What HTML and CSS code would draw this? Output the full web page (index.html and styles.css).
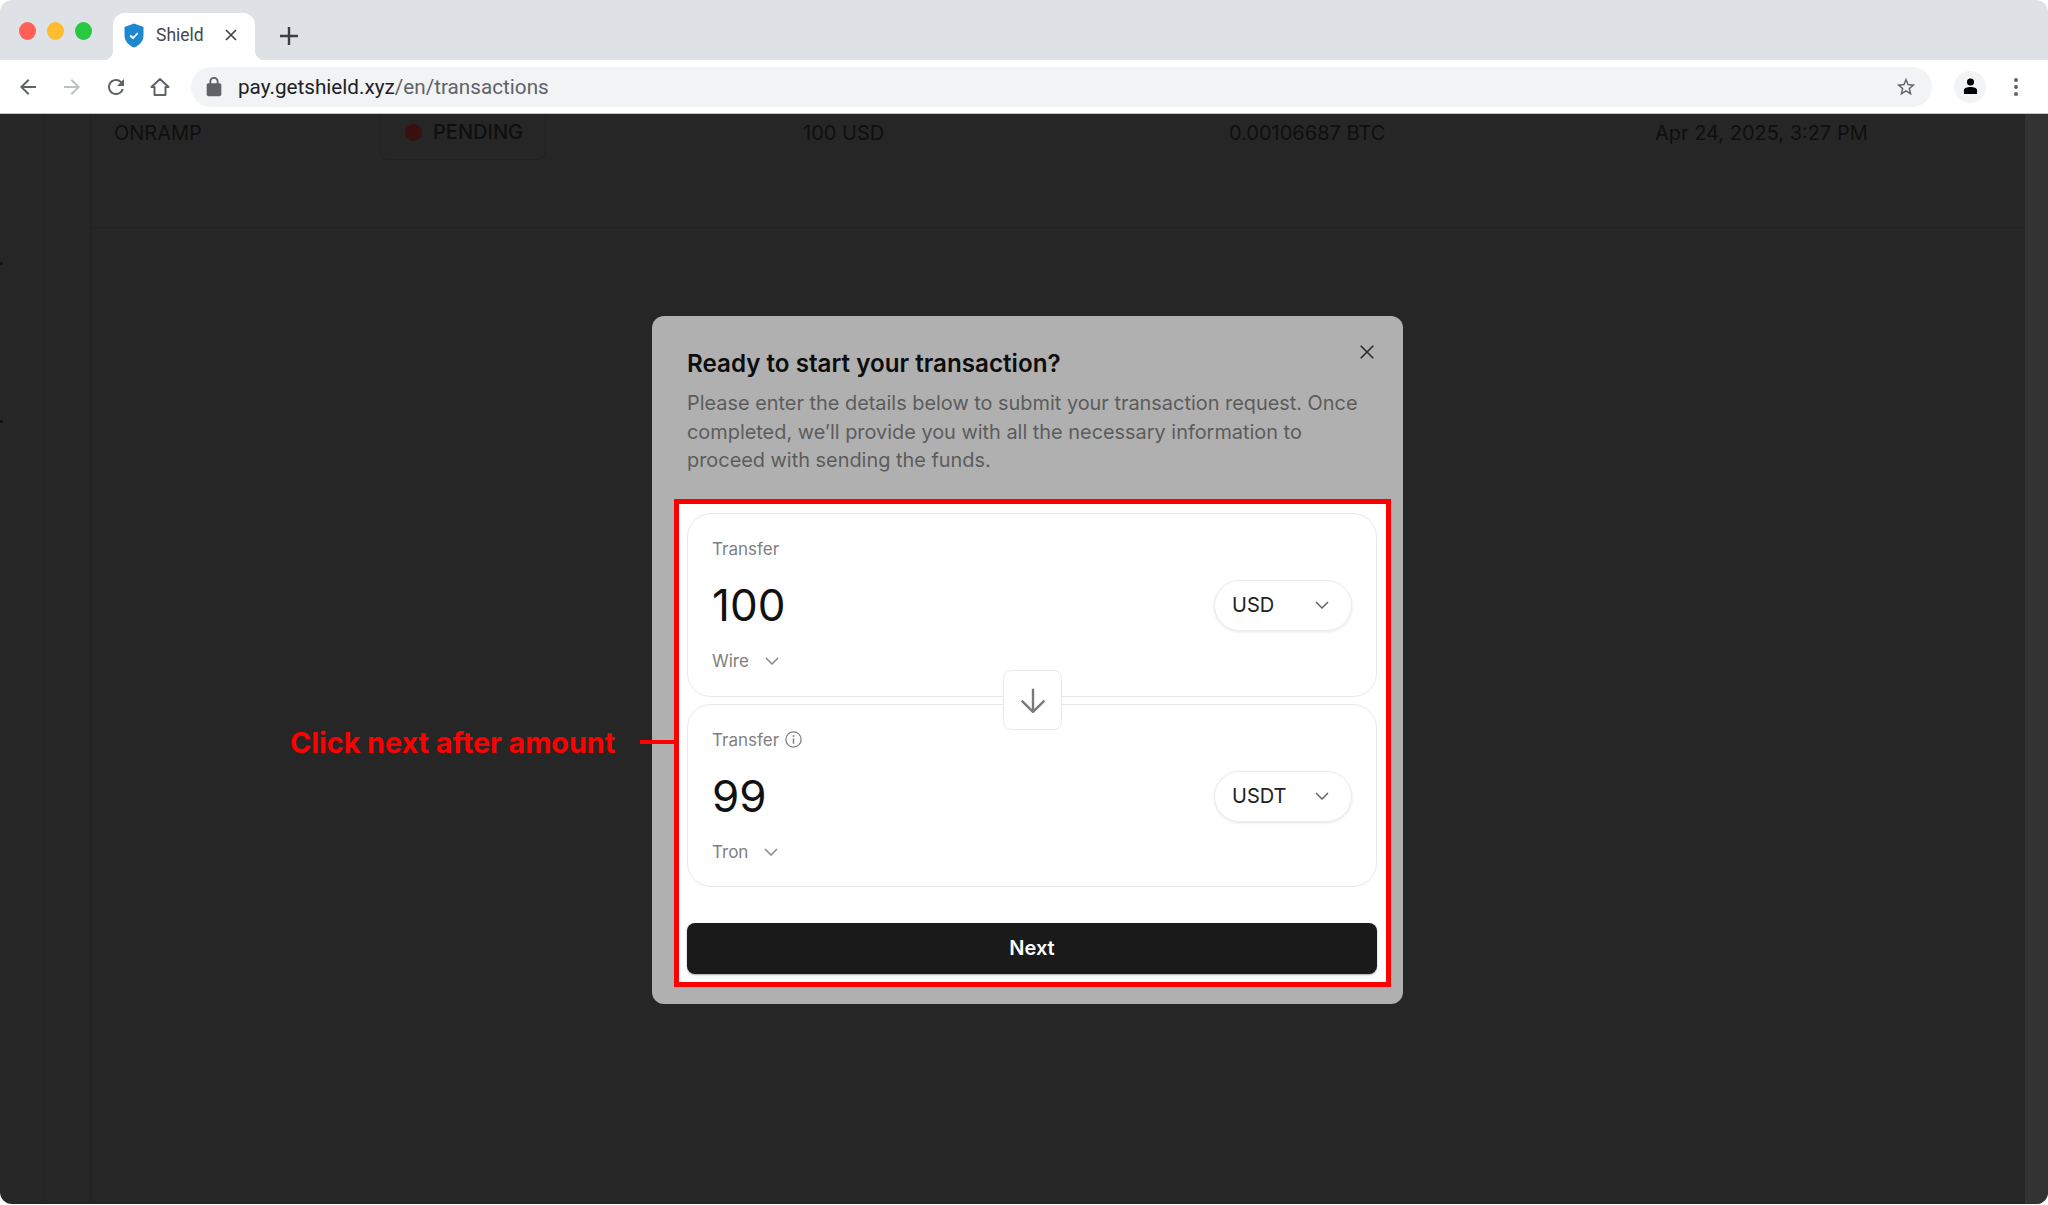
FILE: index.html
```html
<!DOCTYPE html>
<html lang="en">
<head>
    <meta charset="UTF-8">
    <meta name="viewport" content="width=device-width, initial-scale=1.0">
    <title>Shield</title>
    <link rel="stylesheet" href="styles.css">
</head>
<body>
<div class="window">
    <!-- browser chrome -->
    <div class="tabstrip">
        <div class="lights">
            <span class="light red"></span>
            <span class="light yellow"></span>
            <span class="light green"></span>
        </div>
        <div class="tab">
            <svg class="favicon" viewBox="0 0 20 25"><path d="M10 0.5 L19.5 4 V12 C19.5 18 15.5 22.5 10 24.5 C4.500 22.5 0.500 18 0.500 12 V4 Z" fill="#1f87cf"/><path d="M6.200 12.500 L9 15 L13.800 10.200" fill="none" stroke="#fff" stroke-width="1.700"/></svg>
            <span class="tab-title">Shield</span>
            <svg class="tab-close" viewBox="0 0 12 12"><path d="M1 1 L11 11 M11 1 L1 11" stroke="#3c4043" stroke-width="1.600"/></svg>
        </div>
        <svg class="new-tab" viewBox="0 0 20 20"><path d="M10 1 V19 M1 10 H19" stroke="#3c4043" stroke-width="2.400"/></svg>
    </div>
    <div class="toolbar">
        <svg class="tool" viewBox="0 0 24 24"><path d="M20 11H7.830l5.590-5.590L12 4l-8 8 8 8 1.410-1.410L7.830 13H20v-2z" fill="#5f6368"/></svg>
        <svg class="tool" viewBox="0 0 24 24"><path d="M4 11h12.170l-5.590-5.590L12 4l8 8-8 8-1.410-1.410L16.170 13H4v-2z" fill="#bdc1c6"/></svg>
        <svg class="tool" viewBox="0 0 24 24"><path d="M17.650 6.350A7.958 7.958 0 0 0 12 4c-4.420 0-7.990 3.580-7.990 8s3.570 8 7.990 8c3.730 0 6.840-2.550 7.730-6h-2.080A5.990 5.990 0 0 1 12 18c-3.310 0-6-2.690-6-6s2.690-6 6-6c1.660 0 3.140.690 4.220 1.780L13 11h7V4l-2.350 2.350z" fill="#5f6368"/></svg>
        <svg class="tool" viewBox="0 0 24 24"><path d="M12 4 L3.500 12 H6.500 V20 H17.500 V12 H20.500 Z" fill="none" stroke="#5f6368" stroke-width="2" stroke-linejoin="round"/></svg>
        <div class="omnibox">
            <svg class="lock" viewBox="0 0 24 24"><path d="M18 8h-1V6c0-2.760-2.240-5-5-5S7 3.240 7 6v2H6c-1.100 0-2 .900-2 2v10c0 1.100.900 2 2 2h12c1.100 0 2-.900 2-2V10c0-1.100-.900-2-2-2zM9 8V6c0-1.660 1.340-3 3-3s3 1.340 3 3v2H9z" fill="#5f6368"/></svg>
            <span class="url"><span class="host">pay.getshield.xyz</span>/en/transactions</span>
            <svg class="star" viewBox="0 0 24 24"><path d="M22 9.240l-7.190-.620L12 2 9.190 8.630 2 9.240l5.460 4.730L5.820 21 12 17.270 18.180 21l-1.630-7.030L22 9.240zM12 15.400l-3.760 2.270 1-4.280-3.320-2.880 4.380-.380L12 6.100l1.710 4.040 4.380.380-3.320 2.880 1 4.280L12 15.400z" fill="#5f6368"/></svg>
        </div>
        <div class="avatar">
            <svg viewBox="0 0 16 18"><circle cx="8" cy="4.200" r="3.800" fill="#000"/><path d="M1 17 V13 C1 10.500 4.500 9.500 8 9.500 C11.500 9.500 15 10.500 15 13 V17 Z" fill="#000"/></svg>
        </div>
        <svg class="kebab" viewBox="0 0 24 24"><circle cx="12" cy="5" r="2" fill="#5f6368"/><circle cx="12" cy="12" r="2" fill="#5f6368"/><circle cx="12" cy="19" r="2" fill="#5f6368"/></svg>
    </div>

    <!-- page behind the dialog -->
    <div class="page">
        <div class="rail"><span class="rail-tick first"></span><span class="rail-tick second"></span></div>
        <div class="rail wide"></div>
        <div class="content">
            <div class="tx-row">
                <span>ONRAMP</span>
                <span class="status"><span class="status-dot"></span>PENDING</span>
                <span>100 USD</span>
                <span>0.00106687 BTC</span>
                <span>Apr 24, 2025, 3:27 PM</span>
            </div>
        </div>
        <div class="scrollbar"></div>

        <div class="overlay">
            <div class="modal">
                <svg class="modal-close" viewBox="0 0 14 14"><path d="M1.500 1.500 L12.500 12.500 M12.500 1.500 L1.500 12.500" stroke="#2a2a2a" stroke-width="1.400"/></svg>
                <div class="modal-head">
                    <h2>Ready to start your transaction?</h2>
                    <p>Please enter the details below to submit your transaction request. Once completed, we’ll provide you with all the necessary information to proceed with sending the funds.</p>
                </div>
                <div class="highlight">
                    <div class="stack">
                        <div class="card">
                            <div class="label">Transfer</div>
                            <div class="amount-row">
                                <span class="amount">100</span>
                                <span class="pill">USD
                                    <svg class="chev" viewBox="0 0 14 8"><path d="M1 1 L7 7 L13 1" fill="none" stroke="#666" stroke-width="1.500"/></svg>
                                </span>
                            </div>
                            <div class="chain">Wire
                                <svg class="chev" viewBox="0 0 14 8"><path d="M1 1 L7 7 L13 1" fill="none" stroke="#888" stroke-width="1.500"/></svg>
                            </div>
                        </div>
                        <div class="card">
                            <div class="label">Transfer
                                <svg class="info" viewBox="0 0 16 16"><circle cx="8" cy="8" r="7.200" fill="none" stroke="#808080" stroke-width="1.200"/><path d="M8 7 V12" stroke="#808080" stroke-width="1.400"/><circle cx="8" cy="4.700" r="0.900" fill="#808080"/></svg>
                            </div>
                            <div class="amount-row">
                                <span class="amount">99</span>
                                <span class="pill">USDT
                                    <svg class="chev" viewBox="0 0 14 8"><path d="M1 1 L7 7 L13 1" fill="none" stroke="#666" stroke-width="1.500"/></svg>
                                </span>
                            </div>
                            <div class="chain">Tron
                                <svg class="chev" viewBox="0 0 14 8"><path d="M1 1 L7 7 L13 1" fill="none" stroke="#888" stroke-width="1.500"/></svg>
                            </div>
                        </div>
                        <div class="swap">
                            <svg viewBox="0 0 24 24"><path d="M12 1.500 V23 M1.500 12.500 L12 23 L22.500 12.500" fill="none" stroke="#7a7a7a" stroke-width="2.200"/></svg>
                        </div>
                    </div>
                    <button class="next" type="button">Next</button>
                </div>
            </div>
            <div class="annotation">
                <span class="annotation-text">Click next after amount</span>
                <span class="annotation-line"></span>
            </div>
        </div>
    </div>
</div>
</body>
</html>
```

FILE: styles.css
```css
* {
    box-sizing: border-box;
}
html, body {
    margin: 0;
    padding: 0;
    background: #fff;
}
body {
    font-family: Inter, "Liberation Sans", sans-serif;
}
.window {
    width: 2048px;
    height: 1204px;
    display: flex;
    flex-direction: column;
    overflow: hidden;
    border-radius: 12px;
}

/* browser chrome */
.tabstrip {
    height: 60px;
    background: #dee1e6;
    display: flex;
    align-items: flex-end;
    padding-left: 19px;
    flex: none;
}
.lights {
    display: flex;
    gap: 11px;
    align-self: flex-start;
    margin-top: 22px;
}
.light {
    width: 17px;
    height: 18px;
    border-radius: 50%;
}
.light.red {
    background: #ff5f57;
}
.light.yellow {
    background: #febc2e;
}
.light.green {
    background: #28c840;
}
.tab {
    position: relative;
    width: 142px;
    height: 47px;
    margin-left: 21px;
    background: #fff;
    border-radius: 12px 12px 0 0;
    display: flex;
    align-items: center;
    padding: 0 0 3px 11px;
}
.tab::before, .tab::after {
    content: "";
    position: absolute;
    bottom: 0;
    width: 10px;
    height: 10px;
}
.tab::before {
    left: -10px;
    background: radial-gradient(circle at 0 0, #dee1e6 10px, #fff 10.5px);
}
.tab::after {
    right: -10px;
    background: radial-gradient(circle at 100% 0, #dee1e6 10px, #fff 10.5px);
}
.favicon {
    width: 20px;
    height: 25px;
}
.tab-title {
    font-family: Roboto, sans-serif;
    font-size: 17.5px;
    color: #45484c;
    margin-left: 12px;
}
.tab-close {
    width: 12px;
    height: 12px;
    margin-left: 21px;
}
.new-tab {
    width: 20px;
    height: 20px;
    margin-left: 24px;
    align-self: flex-start;
    margin-top: 26px;
}
.toolbar {
    height: 54px;
    background: #fff;
    border-bottom: 1px solid #c4c4c4;
    display: flex;
    align-items: center;
    padding: 0 20px 0 16px;
    flex: none;
}
.tool {
    width: 24px;
    height: 24px;
    margin-right: 20px;
    flex: none;
}
.omnibox {
    width: 1741px;
    height: 40px;
    margin-left: -1px;
    border-radius: 20px;
    background: #f1f3f4;
    display: flex;
    align-items: center;
    padding: 0 14px 0 12px;
}
.lock {
    width: 22px;
    height: 22px;
}
.url {
    font-family: Roboto, sans-serif;
    font-size: 20.7px;
    color: #5f6368;
    margin-left: 13px;
    flex: 1;
}
.host {
    color: #202124;
}
.star {
    width: 22px;
    height: 22px;
    margin-right: 1px;
}
.avatar {
    width: 32px;
    height: 32px;
    margin-left: 22px;
    border-radius: 50%;
    background: #f1f3f4;
    display: flex;
    align-items: center;
    justify-content: center;
}
.avatar svg {
    width: 15px;
    height: 17px;
}
.kebab {
    width: 24px;
    height: 24px;
    margin-left: 18px;
}

/* page behind the overlay */
.page {
    position: relative;
    flex: 1;
    display: flex;
    background: #262626;
    overflow: hidden;
    color: #0f0f0f;
    font-size: 20px;
}
.rail {
    position: relative;
    width: 44px;
    border-right: 1px solid #222;
    flex: none;
}
.rail.wide {
    width: 47px;
}
.rail-tick {
    position: absolute;
    left: 0;
    width: 3px;
    height: 3px;
    background: #141414;
}
.rail-tick.first {
    top: 148px;
}
.rail-tick.second {
    top: 306px;
}
.content {
    flex: 1;
}
.scrollbar {
    width: 23px;
    background: #333;
    flex: none;
}
.tx-row {
    height: 114px;
    border-bottom: 1px solid #222;
    display: grid;
    grid-template-columns: 266px 423px 426px 426px 1fr;
    align-items: start;
    padding-left: 23px;
    line-height: 38px;
}
.status {
    display: flex;
    align-items: center;
    width: 166px;
    height: 56px;
    margin-top: -10px;
    padding-left: 24px;
    border: 1px solid #222;
    border-radius: 8px;
    font-weight: 500;
}
.status-dot {
    width: 17px;
    height: 17px;
    border-radius: 50%;
    background: #3a0f10;
    margin-right: 11px;
}

/* dialog */
.overlay {
    position: absolute;
    inset: 0;
}
.annotation {
    position: absolute;
    left: 290px;
    top: 608px;
    width: 384px;
    height: 40px;
    display: flex;
    align-items: center;
    justify-content: space-between;
}
.annotation-text {
    color: #f00;
    font-size: 28.7px;
    font-weight: 700;
    white-space: nowrap;
}
.annotation-line {
    width: 34px;
    height: 4px;
    background: #f00;
}
.modal {
    position: absolute;
    left: 652px;
    top: 202px;
    width: 751px;
    height: 688px;
    background: #b0b0b0;
    border-radius: 12px;
    padding: 32px 12px 17px 22px;
    color: #111;
}
.modal-close {
    position: absolute;
    top: 28px;
    right: 28px;
    width: 16px;
    height: 16px;
}
.modal-head {
    padding-left: 13px;
    padding-right: 14px;
}
.modal-head h2 {
    margin: 0 0 9px;
    font-size: 24.2px;
    line-height: 32px;
    font-weight: 600;
    color: #0d0d0d;
}
.modal-head p {
    margin: 0 0 24px;
    font-size: 19.9px;
    line-height: 28.6px;
    color: #5c5c5c;
}
.highlight {
    height: 488px;
    background: #fff;
    border: 5px solid #f00;
    padding: 9px 9px 8px 8px;
}
.stack {
    position: relative;
    display: flex;
    flex-direction: column;
    gap: 7px;
}
.card {
    height: 184px;
    border: 1px solid #e8e8e8;
    border-radius: 24px;
    padding: 23px 24px 0 24px;
}
.card + .card {
    height: 183px;
}
.label, .chain {
    display: flex;
    align-items: center;
    font-size: 17px;
    line-height: 24px;
    color: #808080;
}
.info {
    width: 17px;
    height: 17px;
    margin-left: 6px;
}
.amount-row {
    display: flex;
    align-items: center;
    justify-content: space-between;
    margin: 19px 0 18px;
}
.amount {
    font-size: 44px;
    line-height: 1;
    color: #111;
}
.pill {
    width: 138px;
    height: 51px;
    border: 1px solid #eaeaea;
    border-radius: 26px;
    box-shadow: 0 1px 3px rgba(0, 0, 0, 0.1);
    display: flex;
    align-items: center;
    justify-content: space-between;
    padding: 0 22px 0 17px;
    font-size: 20px;
    color: #222;
}
.chev {
    width: 14px;
    height: 8px;
}
.chain .chev {
    margin-left: 16px;
}
.swap {
    position: absolute;
    left: 316px;
    top: 157px;
    width: 59px;
    height: 60px;
    background: #fff;
    border: 1px solid #e8e8e8;
    border-radius: 8px;
    display: flex;
    align-items: center;
    justify-content: center;
}
.swap svg {
    width: 26px;
    height: 26px;
}
.next {
    display: block;
    width: 100%;
    height: 51px;
    margin-top: 36px;
    border: 0;
    border-radius: 8px;
    background: #1a1a1a;
    box-shadow: 0 1px 2px rgba(0, 0, 0, 0.35);
    color: #fff;
    font-family: Inter, "Liberation Sans", sans-serif;
    font-size: 20px;
    font-weight: 600;
}
```
